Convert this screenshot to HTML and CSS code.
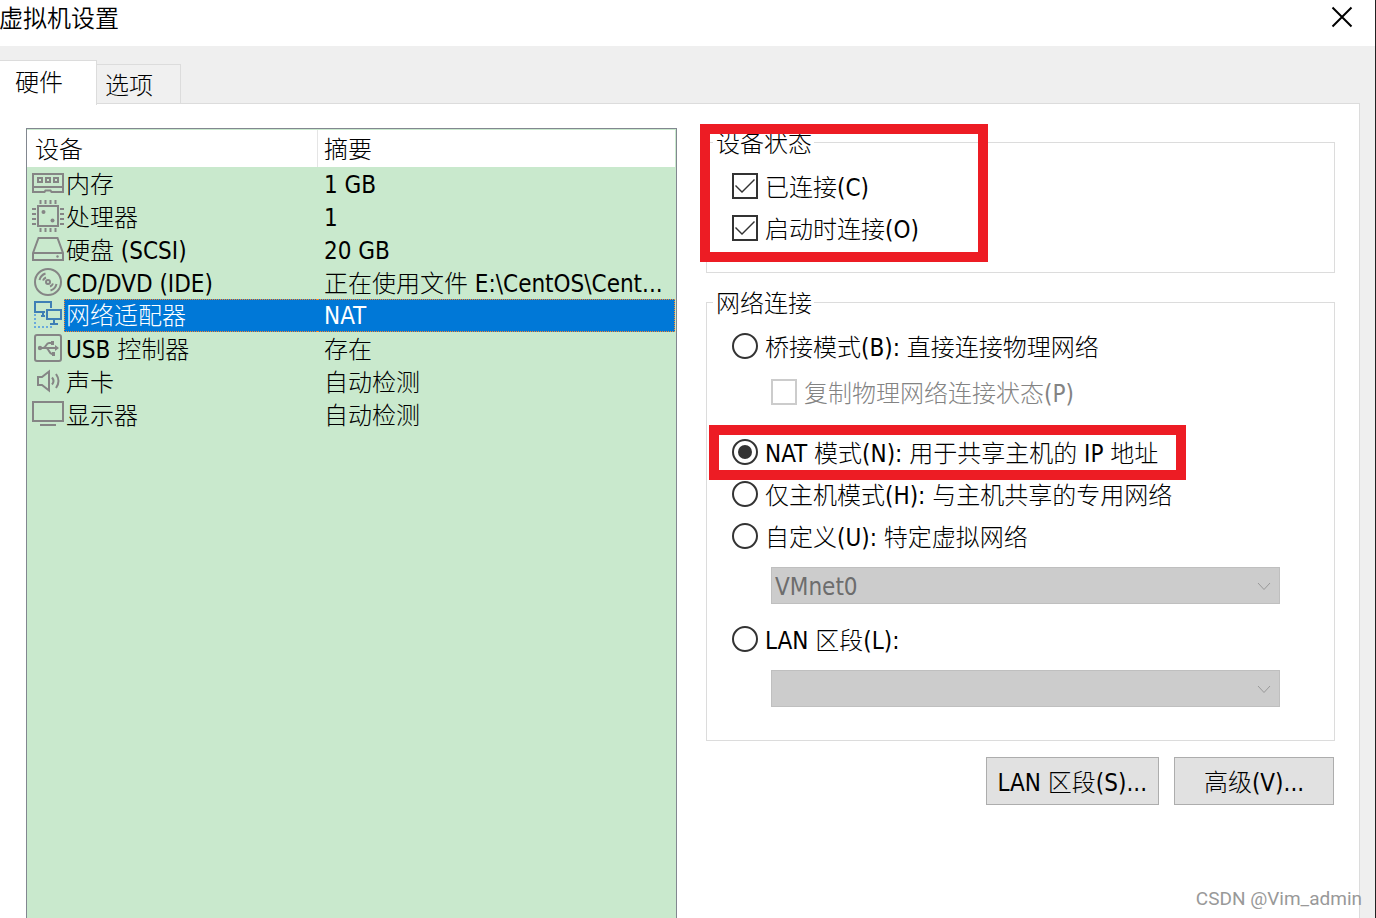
FILE: index.html
```html
<!DOCTYPE html>
<html lang="zh-CN">
<head>
  <meta charset="UTF-8" />
  <title>虚拟机设置</title>
  <meta name="viewport" content="width=device-width, initial-scale=1" />
  <link rel="stylesheet" href="styles.css">
</head>
<body>
  <header class="titlebar">
    <h1>虚拟机设置</h1>
    <button type="button" class="close" aria-label="关闭">
      <svg width="22" height="22" viewBox="0 0 22 22"><path d="M1.500 1.500 20.500 20.500M20.500 1.500 1.500 20.500" /></svg>
    </button>
  </header>

  <nav class="tabs">
    <button type="button" class="tab active">硬件</button>
    <button type="button" class="tab">选项</button>
  </nav>

  <main class="pane">
    <div class="devices">
      <table>
        <colgroup>
          <col class="col-icon" />
          <col class="col-name" />
          <col />
        </colgroup>
        <thead>
          <tr>
            <th colspan="2">设备</th>
            <th>摘要</th>
          </tr>
        </thead>
        <tbody>
          <tr>
            <td class="icon">
              <svg viewBox="0 0 34 33"><path d="M2 7h30v18H20.500l-1-1.500h-5l-1 1.500H2zM2 20h30M7 11h4v4H7zM15 11h4v4h-4zM23 11h4v4h-4z" /></svg>
            </td>
            <td>内存</td>
            <td>1 GB</td>
          </tr>
          <tr>
            <td class="icon">
              <svg viewBox="0 0 34 33">
                <path d="M7 6h20v20H7z" />
                <path d="M9.500 0v4M14.500 0v4M19.500 0v4M24.500 0v4M9.500 28v4M14.500 28v4M19.500 28v4M24.500 28v4M1 9h4M1 14h4M1 19h4M1 24h4M29 9h4M29 14h4M29 19h4M29 24h4" />
                <circle class="fill" cx="12.500" cy="12" r="2" /><circle class="fill" cx="21.500" cy="20.500" r="2" />
              </svg>
            </td>
            <td>处理器</td>
            <td>1</td>
          </tr>
          <tr>
            <td class="icon">
              <svg viewBox="0 0 34 33"><path d="M2 20 7.500 5h19L32 20v7H2zM2 20h30" /><circle class="fill" cx="26.500" cy="23.500" r="1.200" /></svg>
            </td>
            <td>硬盘 (SCSI)</td>
            <td>20 GB</td>
          </tr>
          <tr>
            <td class="icon">
              <svg viewBox="0 0 34 33"><circle cx="17" cy="16" r="13" /><circle cx="17" cy="16" r="2" /><path d="M8.500 14a9 9 0 0 1 6-6.500M12 14.500a5 5 0 0 1 3-3M25.500 18a9 9 0 0 1-6 6.500M22 17.500a5 5 0 0 1-3 3" /></svg>
            </td>
            <td>CD/DVD (IDE)</td>
            <td>正在使用文件 E:\CentOS\Cent...</td>
          </tr>
          <tr class="selected">
            <td class="icon">
              <svg viewBox="0 0 34 33">
                <path d="M14 13H4V3h16v6M10 17h4M12 13v4M16 11h14v9H16zM23 20v5M19 25h8" />
                <path class="dots" d="M4 15v13h18" />
              </svg>
            </td>
            <td>网络适配器</td>
            <td>NAT</td>
          </tr>
          <tr>
            <td class="icon">
              <svg viewBox="0 0 34 33">
                <rect x="4" y="3" width="26" height="26" rx="2" />
                <path d="M9 16h16M12 16c3 0 3-5 6-5h2M15 16c3 0 3 6 6 6h2" />
                <path class="fill" d="m24 13 4 3-4 3zM20 9h3v4h-3zM21 20h3v4h-3z" /><circle class="fill" cx="9" cy="16" r="2.200" />
              </svg>
            </td>
            <td>USB 控制器</td>
            <td>存在</td>
          </tr>
          <tr>
            <td class="icon">
              <svg viewBox="0 0 34 33"><path d="M7 12h4l7-5.500v19L11 20H7zM21 12.500q3 3.500 0 7M25 9q5 7 0 14" /></svg>
            </td>
            <td>声卡</td>
            <td>自动检测</td>
          </tr>
          <tr>
            <td class="icon">
              <svg viewBox="0 0 34 33"><path d="M2 4h30v19H2zM9 27h16" /></svg>
            </td>
            <td>显示器</td>
            <td>自动检测</td>
          </tr>
        </tbody>
      </table>
    </div>

    <form class="settings">
      <div class="group">
        <fieldset>
          <legend>设备状态</legend>
          <label class="option"><input type="checkbox" checked />已连接(C)</label>
          <label class="option"><input type="checkbox" checked />启动时连接(O)</label>
        </fieldset>
        <span class="mark mark-status"></span>
      </div>

      <div class="group">
        <fieldset class="network">
          <legend>网络连接</legend>
          <label class="option"><input type="radio" name="net" />桥接模式(B): 直接连接物理网络</label>
          <label class="option sub"><input type="checkbox" disabled />复制物理网络连接状态(P)</label>
          <label class="option marked"><input type="radio" name="net" checked />NAT 模式(N): 用于共享主机的 IP 地址<span class="mark mark-nat"></span></label>
          <label class="option"><input type="radio" name="net" />仅主机模式(H): 与主机共享的专用网络</label>
          <label class="option"><input type="radio" name="net" />自定义(U): 特定虚拟网络</label>
          <div class="dropdown">
            <select aria-label="特定虚拟网络" disabled><option>VMnet0</option></select>
            <svg width="14" height="9" viewBox="0 0 14 9"><path d="m1 1 6 6.500L13 1" /></svg>
          </div>
          <label class="option"><input type="radio" name="net" />LAN 区段(L):</label>
          <div class="dropdown">
            <select aria-label="LAN 区段" disabled><option></option></select>
            <svg width="14" height="9" viewBox="0 0 14 9"><path d="m1 1 6 6.500L13 1" /></svg>
          </div>
        </fieldset>
      </div>

      <div class="actions">
        <button type="button">LAN 区段(S)...</button>
        <button type="button">高级(V)...</button>
      </div>
    </form>
  </main>

  <div class="watermark">CSDN @Vim_admin</div>
</body>
</html>
```
FILE: styles.css
```css
:root {
  --bg: #efefef;
  --pane: #ffffff;
  --line: #dcdcdc;
  --list: #c9e9cd;
  --icon: #858585;
  --blue: #0078d7;
  --red: #ed1c24;
  --ink: #333333;
}

* {
  box-sizing: border-box;
}

body {
  margin: 0;
  height: 100vh;
  overflow: hidden;
  display: flex;
  flex-direction: column;
  background: var(--bg);
  border-right: 1px solid #222;
  color: #000;
  font-family: "DejaVu Sans Condensed", "Noto Sans CJK SC", sans-serif;
  font-size: 24px;
  line-height: 32px;
}

button,
input,
select {
  font: inherit;
  color: inherit;
  margin: 0;
}

svg {
  display: block;
  fill: none;
}

.titlebar {
  display: flex;
  justify-content: space-between;
  align-items: flex-start;
  height: 46px;
  flex: none;
  background: #fff;
}

.titlebar h1 {
  margin: 0 0 0 -1px;
  font-size: 24px;
  line-height: 38px;
  font-weight: 350;
}

.close {
  padding: 6px 22px;
  border: 0;
  background: none;
}

.close svg {
  stroke: #000;
  stroke-width: 2;
}

.tabs {
  display: flex;
  align-items: flex-end;
  flex: none;
  margin-top: 14px;
  font-weight: 300;
}

.tab {
  height: 40px;
  padding: 3px 27px 0 8px;
  border: 1px solid var(--line);
  border-left: 0;
  background: #f0f0f0;
}

.tab.active {
  height: 45px;
  padding: 0 33px 0 15px;
  margin-bottom: -1px;
  border-bottom: 0;
  background: var(--pane);
  z-index: 1;
}

.pane {
  display: grid;
  grid-template-columns: minmax(0, 651fr) minmax(0, 629fr);
  gap: 29px;
  flex: 1;
  min-height: 0;
  margin: -1px 15px 0 0;
  padding: 24px 24px 0 26px;
  background: var(--pane);
  border: 1px solid var(--line);
  border-width: 1px 1px 0 0;
  font-weight: 300;
}

.devices {
  background: var(--list);
  border: 1px solid #828790;
  border-bottom: 0;
  padding: 1px 1px 0 0;
}

table {
  width: 100%;
  table-layout: fixed;
  border-collapse: separate;
  border-spacing: 0;
}

.col-icon {
  width: 37px;
}

.col-name {
  width: 253px;
}

th {
  height: 37px;
  padding: 2px 8px 0;
  background: #fff;
  font-weight: 300;
  text-align: left;
}

th + th {
  padding-left: 6px;
  border-left: 1px solid #e5e5e5;
}

td {
  height: 33px;
  padding: 3px 0 0 2px;
  line-height: 30px;
  white-space: nowrap;
}

td:last-child {
  padding-left: 7px;
}

td.icon {
  padding: 0 0 0 4px;
}

.icon svg {
  width: 34px;
  height: 33px;
  stroke: var(--icon);
  stroke-width: 2;
}

.icon .fill {
  fill: var(--icon);
  stroke: none;
}

/* focus rectangle around the selected row */
.selected td:not(.icon) {
  padding-top: 2px;
  line-height: 29px;
  background: var(--blue);
  border: 1px dotted #ff8728;
  border-width: 1px 0;
  color: #fff;
}

.selected td:nth-child(2) {
  padding-left: 1px;
  border-left-width: 1px;
}

.selected td:last-child {
  border-right-width: 1px;
}

.selected .icon svg {
  stroke: #3f7fb5;
}

.selected .icon .dots {
  stroke: #6aaadc;
  stroke-dasharray: 2 2;
}

.group {
  position: relative;
  margin-bottom: 15px;
}

fieldset {
  margin: 0;
  padding: 9px 25px 23px;
  border: 1px solid var(--line);
}

fieldset.network {
  padding-bottom: 33px;
}

legend {
  margin-left: -19px;
  padding: 4px 2px 0 3px;
  line-height: 24px;
}

.option {
  display: flex;
  align-items: center;
  gap: 7px;
  height: 42px;
  padding-top: 3px;
  white-space: nowrap;
}

.option input {
  appearance: none;
  display: grid;
  place-content: center;
  flex: none;
  width: 26px;
  height: 26px;
  margin-bottom: 3px;
  border: 2px solid var(--ink);
  background: #fff;
}

.option input[type="radio"] {
  border-radius: 50%;
}

.option input[type="radio"]:checked::before {
  content: "";
  width: 14px;
  height: 14px;
  border-radius: 50%;
  background: var(--ink);
}

.option input[type="checkbox"]:checked::before {
  content: "";
  width: 20px;
  height: 14px;
  background: var(--ink);
  clip-path: polygon(1px 6px, 7px 12px, 19px 0, 20px 1px, 7px 14px, 0 7px);
}

.option.sub {
  margin: 4px 0 18px 39px;
  color: #838383;
}

.option.sub input {
  border-color: #ccc;
}

.option.marked {
  position: relative;
}

.mark {
  position: absolute;
  border: 10px solid var(--red);
  pointer-events: none;
}

.mark-status {
  top: -4px;
  left: -6px;
  width: 288px;
  height: 138px;
}

.mark-nat {
  top: -6px;
  left: -23px;
  width: 477px;
  height: 55px;
}

.dropdown {
  position: relative;
  margin: 10px 29px 14px 39px;
}

.dropdown:last-child {
  margin-bottom: 0;
}

.dropdown select {
  appearance: none;
  display: block;
  width: 100%;
  height: 37px;
  padding: 2px 3px 0;
  border: 1px solid #bfbfbf;
  border-radius: 0;
  background: #ccc;
  color: #6d6d6d;
  opacity: 1;
}

.dropdown svg {
  position: absolute;
  top: 15px;
  right: 9px;
  stroke: #999;
  stroke-width: 1;
}

.actions {
  display: flex;
  justify-content: flex-end;
  gap: 15px;
  padding: 1px 1px 0 0;
}

.actions button {
  min-width: 160px;
  height: 48px;
  padding: 3px 11px 0;
  border: 1px solid #adadad;
  background: #e1e1e1;
}

.watermark {
  position: absolute;
  right: 14px;
  bottom: 7px;
  color: #999;
  font-family: Roboto, sans-serif;
  font-size: 19px;
  line-height: 24px;
  font-weight: 400;
}
```
